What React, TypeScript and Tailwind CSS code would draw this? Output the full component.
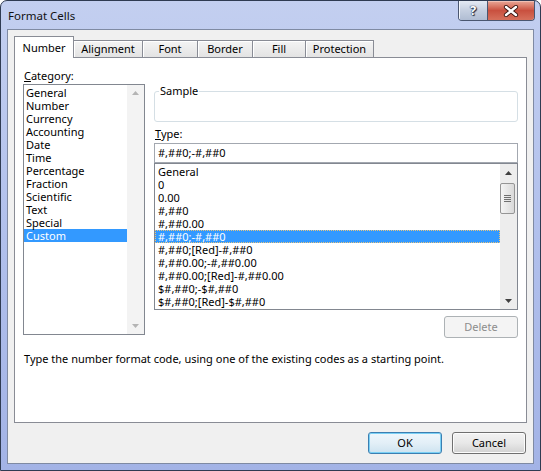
import React from "react";

const categories = [
  "General",
  "Number",
  "Currency",
  "Accounting",
  "Date",
  "Time",
  "Percentage",
  "Fraction",
  "Scientific",
  "Text",
  "Special",
  "Custom",
];

const formats = [
  "General",
  "0",
  "0.00",
  "#,##0",
  "#,##0.00",
  "#,##0;-#,##0",
  "#,##0;[Red]-#,##0",
  "#,##0.00;-#,##0.00",
  "#,##0.00;[Red]-#,##0.00",
  "$#,##0;-$#,##0",
  "$#,##0;[Red]-$#,##0",
];

const tabs = [
  { label: "Alignment", w: "w-[69px]" },
  { label: "Font", w: "w-[55px]" },
  { label: "Border", w: "w-[55px]" },
  { label: "Fill", w: "w-[53px]" },
  { label: "Protection", w: "w-[68px]" },
];

function Arrow({ dir, color }: { dir: "up" | "down"; color: string }) {
  return (
    <svg width="7" height="4" viewBox="0 0 7 4">
      <polygon points={dir === "up" ? "3.5,0 7,4 0,4" : "0,0 7,0 3.5,4"} fill={color} />
    </svg>
  );
}

function CaptionButtons() {
  return (
    <div className="flex h-[20px] overflow-hidden rounded-b-[4px] border border-t-0 border-[#4a5670]">
      <div className="flex w-[29px] items-center justify-center border-r border-[#4a5670] bg-linear-to-b from-[#e4eaf4] via-[#c5cfe0] to-[#b0bdd3] shadow-[inset_1px_0_0_#f4f7fb]">
        <span className="text-[13px] font-bold leading-none text-white [text-shadow:0_0_1px_#1f2a44,0_0_1px_#1f2a44,1px_1px_1px_#1f2a44]">
          ?
        </span>
      </div>
      <div className="flex w-[46px] items-center justify-center bg-linear-to-b from-[#e8a797] via-[#c9503f] to-[#d6705c] shadow-[inset_0_1px_0_#f0c0b4]">
        <svg width="16" height="12" viewBox="0 0 16 12">
          <path d="M3 2 L13 10 M13 2 L3 10" stroke="#3a1712" strokeWidth="4.2" strokeLinecap="round" />
          <path d="M3 2 L13 10 M13 2 L3 10" stroke="#ffffff" strokeWidth="2.4" strokeLinecap="round" />
        </svg>
      </div>
    </div>
  );
}

function Button({ label, primary, disabled }: { label: string; primary?: boolean; disabled?: boolean }) {
  if (disabled) {
    return (
      <div className="flex h-[22px] w-[74px] items-center justify-center rounded-[3px] border border-[#adb2b5] bg-[#f4f4f4] text-[#8d8d8d]">
        {label}
      </div>
    );
  }
  return (
    <div
      className={
        primary
          ? "flex h-[22px] w-[74px] items-center justify-center rounded-[3px] border border-[#3c7fb1] bg-linear-to-b from-[#eef7fc] via-[#e3eff7] to-[#cde3f0] shadow-[inset_0_0_0_1px_#7ad0f5]"
          : "flex h-[22px] w-[74px] items-center justify-center rounded-[3px] border border-[#707070] bg-linear-to-b from-[#f3f3f3] via-[#e8e8e8] to-[#d2d2d2] shadow-[inset_0_0_0_1px_#fcfcfc]"
      }
    >
      {label}
    </div>
  );
}

export default function App() {
  return (
    <div className="h-[471px] w-[541px] bg-white font-['Noto_Sans',sans-serif] text-[11px] text-black">
      <div className="flex h-[471px] w-[541px] flex-col rounded-t-[7px] border border-[#2f3b52] bg-linear-to-b from-[#c3cff0] via-[#b1c0ec] to-[#a3b3e6] px-[6px] pb-[6px]">
        {/* title bar */}
        <div className="flex h-[28px] items-start justify-between">
          <span className="ml-[1px] pt-[7px] text-[11.5px] leading-[15px] text-[#111]">Format Cells</span>
          <div className="mr-[-1px]">
            <CaptionButtons />
          </div>
        </div>

        {/* client area */}
        <div className="flex flex-1 flex-col border border-[#7f8aa3] bg-[#f0f0f0] px-[6px] pt-[6px]">
          {/* tabs */}
          <div className="flex h-[21px] items-end">
            <div className="relative z-10 mb-[-1px] flex h-[22px] w-[60px] justify-center border border-b-0 border-[#898c95] bg-white pt-[4px] leading-[14px]">
              Number
            </div>
            {tabs.map((t) => (
              <div
                key={t.label}
                className={`flex h-[17px] ${t.w} justify-center border-r border-t border-[#898c95] bg-linear-to-b from-[#f4f4f4] to-[#e3e3e3] pt-[1px] leading-[14px] shadow-[inset_1px_1px_0_#fff]`}
              >
                {t.label}
              </div>
            ))}
          </div>

          {/* tab panel */}
          <div className="flex h-[366px] w-[513px] flex-col border border-[#898c95] bg-white pl-[8px] pt-[10px]">
            <div className="flex">
              {/* category column */}
              <div className="flex w-[122px] flex-col">
                <div className="pl-[1px] leading-[15px]">
                  <span className="underline">C</span>ategory:
                </div>
                <div className="mt-[1px] flex h-[251px] border border-[#828790]">
                  <div className="flex-1 pt-[1px]">
                    {categories.map((c) => (
                      <div
                        key={c}
                        className={
                          c === "Custom"
                            ? "h-[13px] bg-[#3399ff] pl-[2px] leading-[13px] text-white"
                            : "h-[13px] pl-[2px] leading-[13px]"
                        }
                      >
                        {c}
                      </div>
                    ))}
                  </div>
                  <div className="flex w-[17px] flex-col items-center justify-between bg-[#f3f3f3] py-[6px]">
                    <Arrow dir="up" color="#b4b4b4" />
                    <Arrow dir="down" color="#b4b4b4" />
                  </div>
                </div>
              </div>

              {/* type column */}
              <div className="ml-[9px] flex w-[364px] flex-col">
                <fieldset className="mt-[16px] h-[38px] rounded-[3px] border border-[#d5dfe5]">
                  <legend className="ml-[4px] px-[1px] leading-[14px]">Sample</legend>
                </fieldset>
                <div className="mt-[5px] pl-[1px] leading-[14px]">
                  <span className="underline">T</span>ype:
                </div>
                <div className="mt-[2px] flex h-[20px] items-center border border-[#a3a8b0] pl-[3px]">
                  #,##0;-#,##0
                </div>
                <div className="flex h-[147px] border border-[#828790]">
                  <div className="flex-1 pt-[1px]">
                    {formats.map((f, i) => (
                      <div
                        key={f}
                        className={
                          i === 5
                            ? "h-[13px] border border-dotted border-[#e9c47b] bg-[#3399ff] pl-[2px] leading-[11px] text-white"
                            : "h-[13px] pl-[3px] leading-[13px]"
                        }
                      >
                        {f}
                      </div>
                    ))}
                  </div>
                  <div className="flex w-[17px] flex-col bg-[#ededed]">
                    <div className="flex h-[17px] items-center justify-center">
                      <Arrow dir="up" color="#404040" />
                    </div>
                    <div className="mt-[2px] flex h-[31px] w-[15px] flex-col items-center justify-center gap-[1px] rounded-[2px] border border-[#959595] bg-linear-to-r from-[#f4f4f4] to-[#d9d9d9]">
                      <div className="h-[1px] w-[7px] bg-[#6f6f6f]" />
                      <div className="h-[1px] w-[7px] bg-[#6f6f6f]" />
                      <div className="h-[1px] w-[7px] bg-[#6f6f6f]" />
                      <div className="h-[1px] w-[7px] bg-[#6f6f6f]" />
                    </div>
                    <div className="flex-1" />
                    <div className="flex h-[17px] items-center justify-center">
                      <Arrow dir="down" color="#404040" />
                    </div>
                  </div>
                </div>
                <div className="mt-[6px] self-end">
                  <Button label="Delete" disabled />
                </div>
              </div>
            </div>

            <p className="mt-[14px] pl-[1px] leading-[14px]">
              Type the number format code, using one of the existing codes as a starting point.
            </p>
          </div>

          {/* dialog buttons */}
          <div className="mt-[9px] flex justify-end gap-[10px] pr-[1px]">
            <Button label="OK" primary />
            <Button label="Cancel" />
          </div>
        </div>
      </div>
    </div>
  );
}
